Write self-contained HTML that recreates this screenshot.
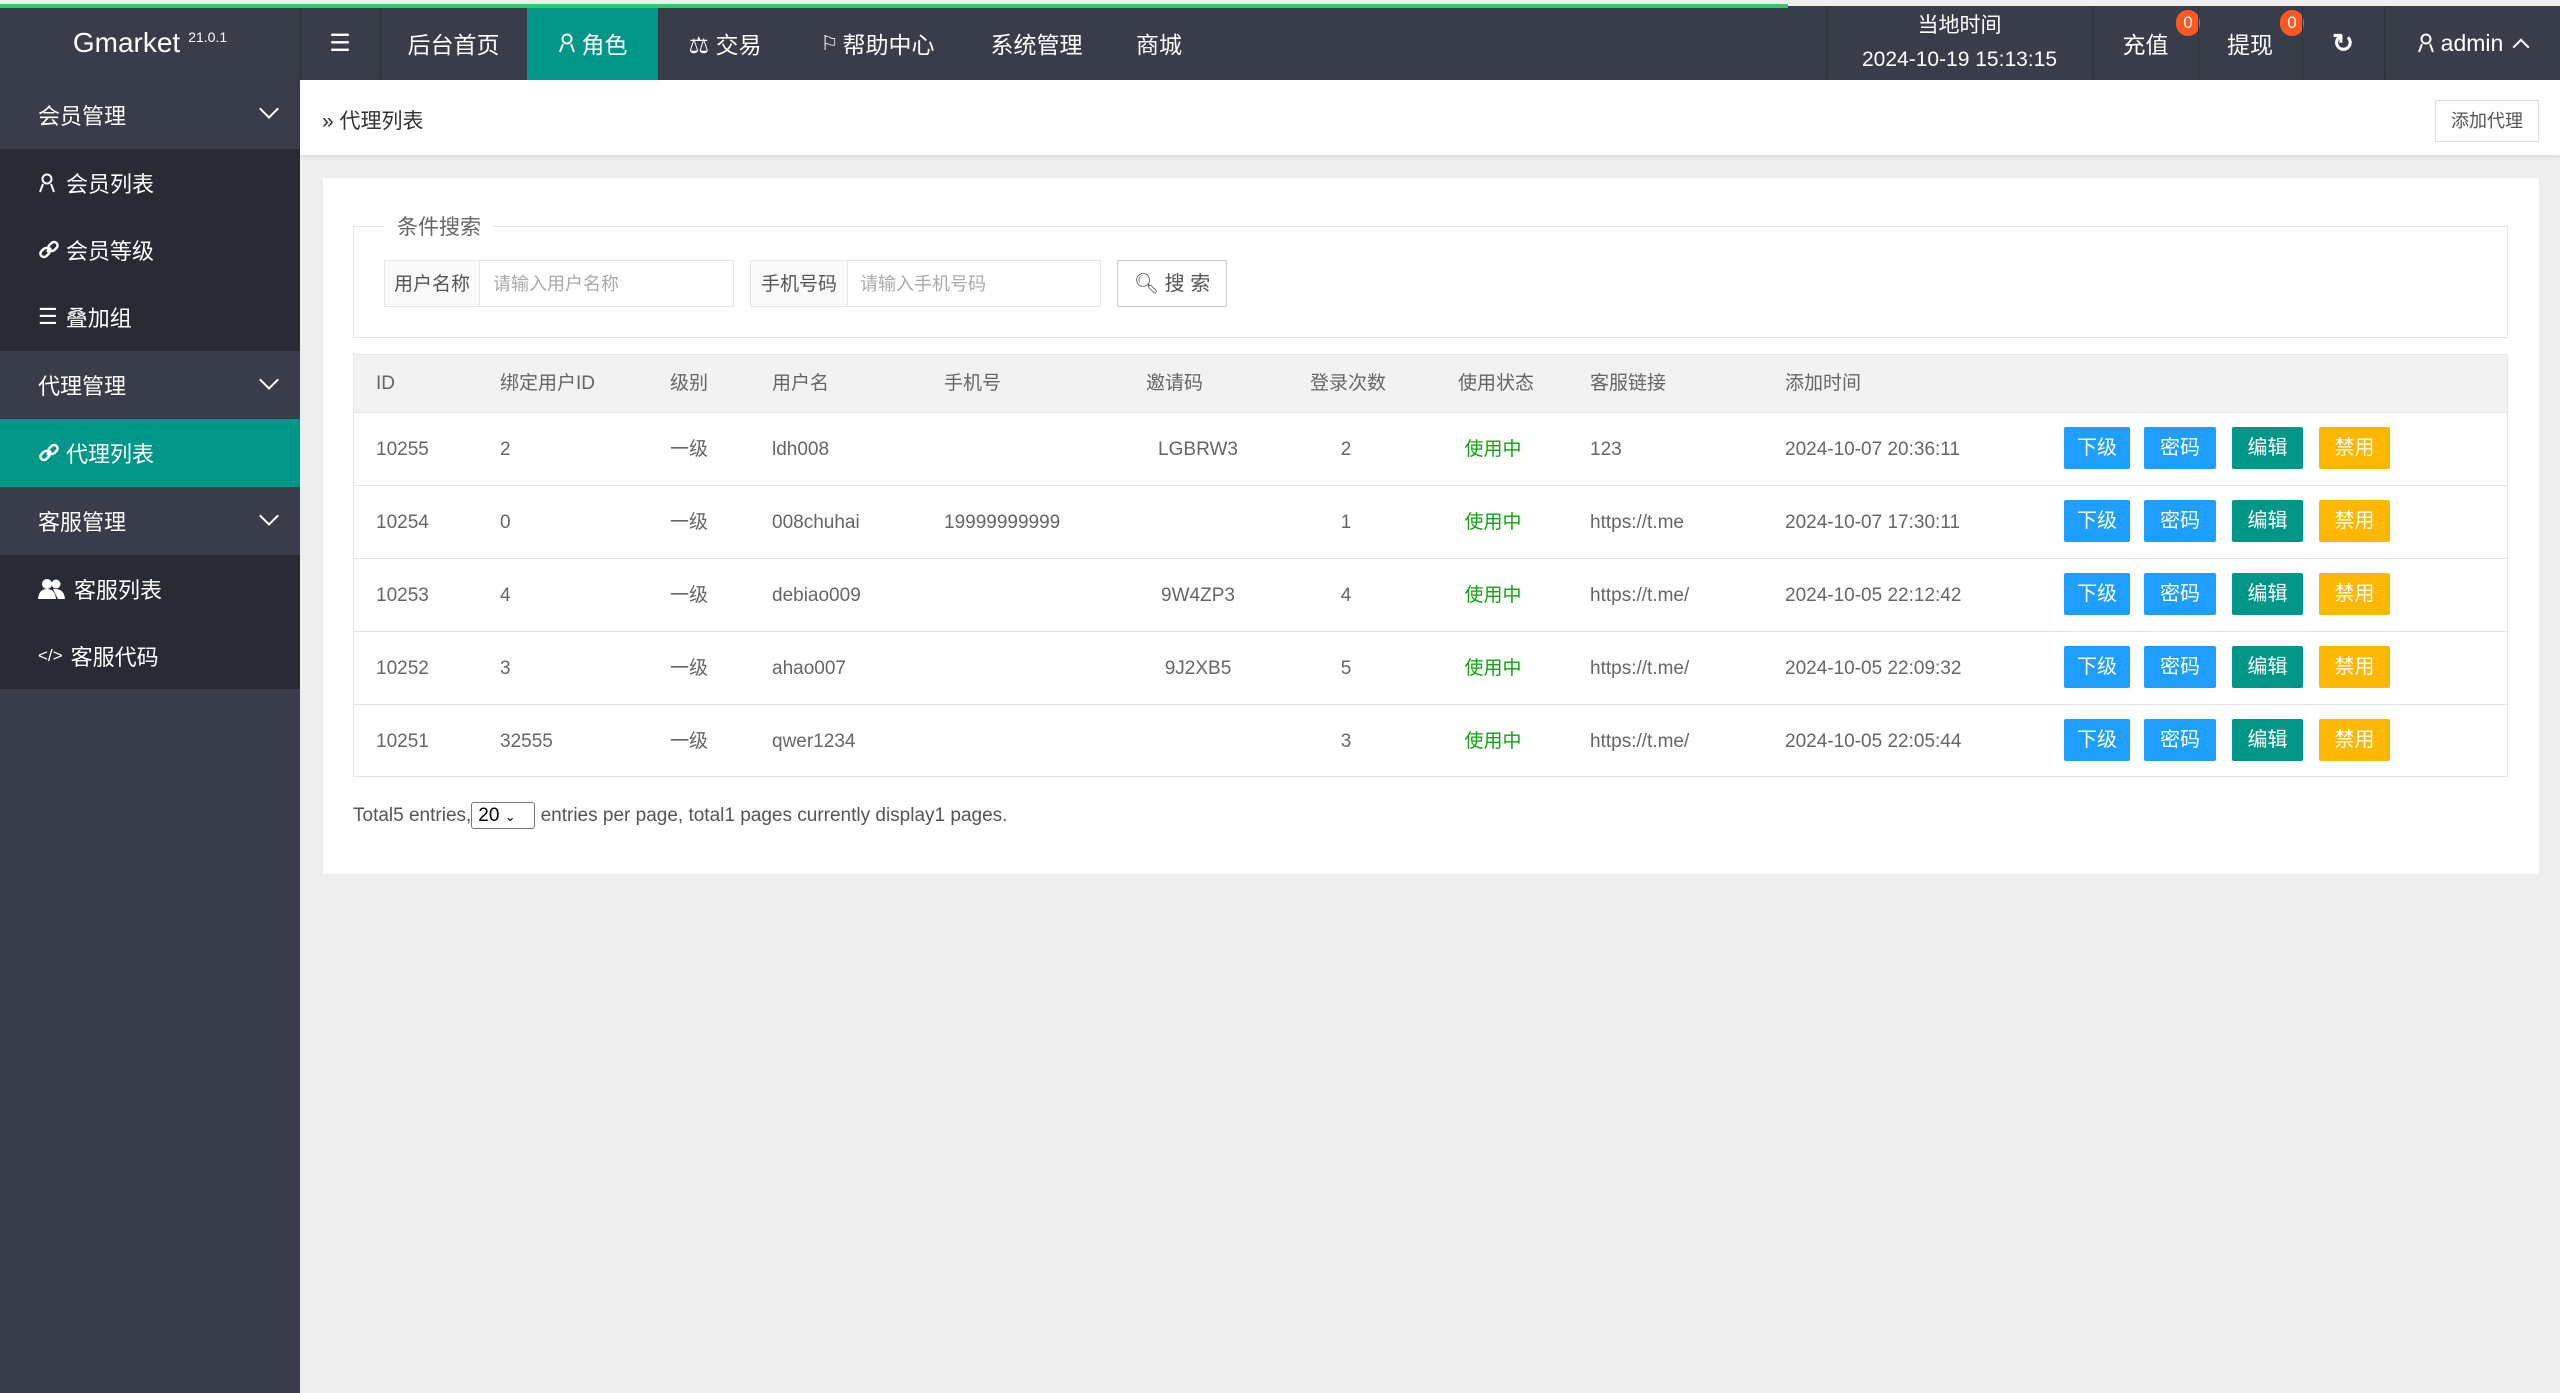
<!DOCTYPE html>
<html><head><meta charset="utf-8"><style>
*{margin:0;padding:0;box-sizing:border-box}
body{width:2560px;height:1393px;overflow:hidden;background:#eeeeee;font-family:"Liberation Sans","Noto Sans CJK SC",sans-serif;color:#666;position:relative}
.a{position:absolute}
.top{left:0;top:6px;width:2560px;height:74px;background:#393d49}
.prog{left:0;top:4px;width:1788px;height:4px;background:#36c66a;z-index:5}
.nav{top:6px;height:74px;color:#fff;font-size:23px;display:flex;align-items:center;justify-content:center}
.side{left:0;top:80px;width:300px;height:1313px;background:#393d49}
.sub{left:0;width:300px;background:#282b33}
.si{left:0;width:300px;height:67px;color:#fff;font-size:22px;display:flex;align-items:center;padding-left:38px}
.chev{position:absolute;right:24px;top:22px;width:14px;height:14px;border-right:2px solid #fff;border-bottom:2px solid #fff;transform:rotate(45deg)}
.th{font-size:19px;color:#666;top:355px;height:58px;line-height:58px}
.td{font-size:19px;color:#666;height:73px;line-height:75px}
.btn{height:42px;line-height:42px;color:#fff;font-size:20px;text-align:center;border-radius:2px}
</style></head><body>
<div class="a prog"></div>
<div class="a top"></div>
<div class="a nav" style="left:0;width:300px;font-size:28px">Gmarket<sup style="font-size:14px;margin-left:8px;position:relative;top:-6px">21.0.1</sup></div>
<div class="a" style="left:300px;top:6px;width:1px;height:74px;background:#2e323c"></div>
<div class="a nav" style="left:300px;width:80px;font-size:24px">☰</div>
<div class="a" style="left:380px;top:6px;width:1px;height:74px;background:#2e323c"></div>
<div class="a nav" style="left:380px;width:147px">后台首页</div>
<div class="a nav" style="left:527px;width:131px;background:#009688"><svg width="18" height="20" viewBox="0 0 18 20" style="margin-right:6px"><circle cx="9" cy="6" r="4.5" fill="none" stroke="#fff" stroke-width="2"/><path d="M2 19 L5 11 M16 19 L13 11" stroke="#fff" stroke-width="2"/></svg>角色</div>
<div class="a nav" style="left:658px;width:134px">⚖ 交易</div>
<div class="a nav" style="left:792px;width:171px"><span style="font-size:20px;margin-right:4px">⚐</span>帮助中心</div>
<div class="a nav" style="left:963px;width:147px">系统管理</div>
<div class="a nav" style="left:1110px;width:98px">商城</div>
<div class="a" style="left:1826px;top:6px;width:1px;height:74px;background:#2e323c"></div>
<div class="a nav" style="left:1826px;width:267px;flex-direction:column;font-size:21px;line-height:34px"><div>当地时间</div><div>2024-10-19 15:13:15</div></div>
<div class="a" style="left:2093px;top:6px;width:1px;height:74px;background:#2e323c"></div>
<div class="a nav" style="left:2093px;width:105px">充值</div>
<div class="a" style="left:2176px;top:10px;width:24px;height:26px;border-radius:12px;background:#ff5722;color:#fff;font-size:17px;text-align:center;line-height:26px">0</div>
<div class="a" style="left:2198px;top:6px;width:1px;height:74px;background:#2e323c"></div>
<div class="a nav" style="left:2198px;width:104px">提现</div>
<div class="a" style="left:2280px;top:10px;width:24px;height:26px;border-radius:12px;background:#ff5722;color:#fff;font-size:17px;text-align:center;line-height:26px">0</div>
<div class="a" style="left:2302px;top:6px;width:1px;height:74px;background:#2e323c"></div>
<div class="a nav" style="left:2302px;width:82px;font-size:26px;font-weight:bold">↻</div>
<div class="a" style="left:2384px;top:6px;width:1px;height:74px;background:#2e323c"></div>
<div class="a nav" style="left:2384px;width:176px"><svg width="18" height="20" viewBox="0 0 18 20" style="margin-right:6px"><circle cx="9" cy="6" r="4.5" fill="none" stroke="#fff" stroke-width="2"/><path d="M2 19 L5 11 M16 19 L13 11" stroke="#fff" stroke-width="2"/></svg>admin<span style="margin-left:12px;display:inline-block;width:12px;height:12px;border-left:2px solid #fff;border-top:2px solid #fff;transform:rotate(45deg);margin-top:8px"></span></div>

<div class="a side"></div>
<div class="a si" style="top:80px;height:69px">会员管理<span class="chev"></span></div>
<div class="a sub" style="top:149px;height:202px"></div>
<div class="a si" style="top:149px"><svg width="18" height="20" viewBox="0 0 18 20" style="margin-right:10px"><circle cx="9" cy="6" r="4.5" fill="none" stroke="#fff" stroke-width="2"/><path d="M2 19 L5 11 M16 19 L13 11" stroke="#fff" stroke-width="2"/></svg>会员列表</div>
<div class="a si" style="top:216px"><svg width="22" height="22" viewBox="0 0 22 22" style="margin-right:6px"><path d="M9 13 L13 9" stroke="#fff" stroke-width="2.5"/><rect x="2" y="10" width="10" height="7" rx="3.5" transform="rotate(-45 7 13.5)" fill="none" stroke="#fff" stroke-width="2.5"/><rect x="10" y="4" width="10" height="7" rx="3.5" transform="rotate(-45 15 7.5)" fill="none" stroke="#fff" stroke-width="2.5"/></svg>会员等级</div>
<div class="a si" style="top:283px"><span style="margin-right:8px">☰</span>叠加组</div>
<div class="a si" style="top:351px;height:68px">代理管理<span class="chev"></span></div>
<div class="a si" style="top:419px;height:68px;background:#009688"><svg width="22" height="22" viewBox="0 0 22 22" style="margin-right:6px"><path d="M9 13 L13 9" stroke="#fff" stroke-width="2.5"/><rect x="2" y="10" width="10" height="7" rx="3.5" transform="rotate(-45 7 13.5)" fill="none" stroke="#fff" stroke-width="2.5"/><rect x="10" y="4" width="10" height="7" rx="3.5" transform="rotate(-45 15 7.5)" fill="none" stroke="#fff" stroke-width="2.5"/></svg>代理列表</div>
<div class="a si" style="top:487px;height:68px">客服管理<span class="chev"></span></div>
<div class="a sub" style="top:555px;height:134px"></div>
<div class="a si" style="top:555px"><svg width="28" height="22" viewBox="0 0 28 22" style="margin-right:8px"><circle cx="9" cy="6" r="5" fill="#fff"/><path d="M0 21 Q1 11 9 11 Q17 11 18 21Z" fill="#fff"/><circle cx="18" cy="6" r="4.5" fill="#fff"/><path d="M15 11 Q26 10 27 21 H20Z" fill="#fff"/></svg>客服列表</div>
<div class="a si" style="top:622px"><span style="margin-right:8px;font-size:17px">&lt;/&gt;</span>客服代码</div>

<div class="a" style="left:300px;top:80px;width:2260px;height:75px;background:#fff;box-shadow:0 2px 4px rgba(0,0,0,.08)"></div>
<div class="a" style="left:322px;top:105px;font-size:21px;color:#333">» 代理列表</div>
<div class="a" style="left:2435px;top:100px;width:104px;height:42px;border:1px solid #ddd;background:#fff;font-size:18px;color:#555;text-align:center;line-height:40px">添加代理</div>

<div class="a" style="left:323px;top:178px;width:2216px;height:696px;background:#fff"></div>
<div class="a" style="left:353px;top:226px;width:2155px;height:112px;border:1px solid #e6e6e6"></div>
<div class="a" style="left:385px;top:211px;padding:0 12px;background:#fff;font-size:21px;color:#666">条件搜索</div>
<div class="a" style="left:384px;top:260px;width:350px;height:47px;border:1px solid #e6e6e6"></div>
<div class="a" style="left:384px;top:260px;width:96px;height:47px;background:#fafafa;border:1px solid #e6e6e6;font-size:19px;line-height:47px;text-align:center;color:#555">用户名称</div>
<div class="a" style="left:493px;top:261px;font-size:18px;line-height:47px;color:#aaa">请输入用户名称</div>
<div class="a" style="left:750px;top:260px;width:351px;height:47px;border:1px solid #e6e6e6"></div>
<div class="a" style="left:750px;top:260px;width:98px;height:47px;background:#fafafa;border:1px solid #e6e6e6;font-size:19px;line-height:47px;text-align:center;color:#555">手机号码</div>
<div class="a" style="left:860px;top:261px;font-size:18px;line-height:47px;color:#aaa">请输入手机号码</div>
<div class="a" style="left:1117px;top:260px;width:110px;height:47px;border:1px solid #c9c9c9;border-radius:2px;font-size:20px;line-height:47px;text-align:center;color:#555">🔍︎ 搜 索</div>

<div class="a" style="left:353px;top:354px;width:2155px;height:423px;border:1px solid #e6e6e6"></div>
<div class="a" style="left:354px;top:355px;width:2153px;height:57px;background:#f2f2f2"></div>
<div class="a th" style="left:376px">ID</div>
<div class="a th" style="left:500px">绑定用户ID</div>
<div class="a th" style="left:670px">级别</div>
<div class="a th" style="left:772px">用户名</div>
<div class="a th" style="left:944px">手机号</div>
<div class="a th" style="left:1146px">邀请码</div>
<div class="a th" style="left:1310px">登录次数</div>
<div class="a th" style="left:1458px">使用状态</div>
<div class="a th" style="left:1590px">客服链接</div>
<div class="a th" style="left:1785px">添加时间</div>

<div class="a" style="left:354px;top:485px;width:2153px;height:1px;background:#e6e6e6"></div>
<div class="a" style="left:354px;top:558px;width:2153px;height:1px;background:#e6e6e6"></div>
<div class="a" style="left:354px;top:631px;width:2153px;height:1px;background:#e6e6e6"></div>
<div class="a" style="left:354px;top:704px;width:2153px;height:1px;background:#e6e6e6"></div>
<div class="a" style="left:354px;top:412px;width:2153px;height:1px;background:#e6e6e6"></div>

<div class="a td" style="left:376px;top:412px">10255</div><div class="a td" style="left:500px;top:412px">2</div><div class="a td" style="left:670px;top:412px">一级</div><div class="a td" style="left:772px;top:412px">ldh008</div><div class="a td" style="left:1138px;width:120px;text-align:center;top:412px">LGBRW3</div><div class="a td" style="left:1306px;width:80px;text-align:center;top:412px">2</div><div class="a td" style="left:1453px;width:80px;text-align:center;top:412px;color:#12a212">使用中</div><div class="a td" style="left:1590px;top:412px">123</div><div class="a td" style="left:1785px;top:412px">2024-10-07 20:36:11</div>
<div class="a td" style="left:376px;top:485px">10254</div><div class="a td" style="left:500px;top:485px">0</div><div class="a td" style="left:670px;top:485px">一级</div><div class="a td" style="left:772px;top:485px">008chuhai</div><div class="a td" style="left:944px;top:485px">19999999999</div><div class="a td" style="left:1306px;width:80px;text-align:center;top:485px">1</div><div class="a td" style="left:1453px;width:80px;text-align:center;top:485px;color:#12a212">使用中</div><div class="a td" style="left:1590px;top:485px">https://t.me</div><div class="a td" style="left:1785px;top:485px">2024-10-07 17:30:11</div>
<div class="a td" style="left:376px;top:558px">10253</div><div class="a td" style="left:500px;top:558px">4</div><div class="a td" style="left:670px;top:558px">一级</div><div class="a td" style="left:772px;top:558px">debiao009</div><div class="a td" style="left:1138px;width:120px;text-align:center;top:558px">9W4ZP3</div><div class="a td" style="left:1306px;width:80px;text-align:center;top:558px">4</div><div class="a td" style="left:1453px;width:80px;text-align:center;top:558px;color:#12a212">使用中</div><div class="a td" style="left:1590px;top:558px">https://t.me/</div><div class="a td" style="left:1785px;top:558px">2024-10-05 22:12:42</div>
<div class="a td" style="left:376px;top:631px">10252</div><div class="a td" style="left:500px;top:631px">3</div><div class="a td" style="left:670px;top:631px">一级</div><div class="a td" style="left:772px;top:631px">ahao007</div><div class="a td" style="left:1138px;width:120px;text-align:center;top:631px">9J2XB5</div><div class="a td" style="left:1306px;width:80px;text-align:center;top:631px">5</div><div class="a td" style="left:1453px;width:80px;text-align:center;top:631px;color:#12a212">使用中</div><div class="a td" style="left:1590px;top:631px">https://t.me/</div><div class="a td" style="left:1785px;top:631px">2024-10-05 22:09:32</div>
<div class="a td" style="left:376px;top:704px">10251</div><div class="a td" style="left:500px;top:704px">32555</div><div class="a td" style="left:670px;top:704px">一级</div><div class="a td" style="left:772px;top:704px">qwer1234</div><div class="a td" style="left:1306px;width:80px;text-align:center;top:704px">3</div><div class="a td" style="left:1453px;width:80px;text-align:center;top:704px;color:#12a212">使用中</div><div class="a td" style="left:1590px;top:704px">https://t.me/</div><div class="a td" style="left:1785px;top:704px">2024-10-05 22:05:44</div>

<div class="a btn" style="left:2064px;top:427px;width:66px;background:#1e9fff">下级</div><div class="a btn" style="left:2144px;top:427px;width:72px;background:#1e9fff">密码</div><div class="a btn" style="left:2232px;top:427px;width:71px;background:#009688">编辑</div><div class="a btn" style="left:2319px;top:427px;width:71px;background:#ffb800">禁用</div>
<div class="a btn" style="left:2064px;top:500px;width:66px;background:#1e9fff">下级</div><div class="a btn" style="left:2144px;top:500px;width:72px;background:#1e9fff">密码</div><div class="a btn" style="left:2232px;top:500px;width:71px;background:#009688">编辑</div><div class="a btn" style="left:2319px;top:500px;width:71px;background:#ffb800">禁用</div>
<div class="a btn" style="left:2064px;top:573px;width:66px;background:#1e9fff">下级</div><div class="a btn" style="left:2144px;top:573px;width:72px;background:#1e9fff">密码</div><div class="a btn" style="left:2232px;top:573px;width:71px;background:#009688">编辑</div><div class="a btn" style="left:2319px;top:573px;width:71px;background:#ffb800">禁用</div>
<div class="a btn" style="left:2064px;top:646px;width:66px;background:#1e9fff">下级</div><div class="a btn" style="left:2144px;top:646px;width:72px;background:#1e9fff">密码</div><div class="a btn" style="left:2232px;top:646px;width:71px;background:#009688">编辑</div><div class="a btn" style="left:2319px;top:646px;width:71px;background:#ffb800">禁用</div>
<div class="a btn" style="left:2064px;top:719px;width:66px;background:#1e9fff">下级</div><div class="a btn" style="left:2144px;top:719px;width:72px;background:#1e9fff">密码</div><div class="a btn" style="left:2232px;top:719px;width:71px;background:#009688">编辑</div><div class="a btn" style="left:2319px;top:719px;width:71px;background:#ffb800">禁用</div>

<div class="a" style="left:353px;top:802px;font-size:19px;color:#555;line-height:28px;white-space:nowrap">Total5 entries,<span style="display:inline-block;width:64px;height:27px;border:1px solid #777;border-radius:3px;vertical-align:middle;font-size:19px;line-height:25px;padding-left:6px;color:#000">20 <span style="font-size:13px">⌄</span></span> entries per page, total1 pages currently display1 pages.</div>
</body></html>
